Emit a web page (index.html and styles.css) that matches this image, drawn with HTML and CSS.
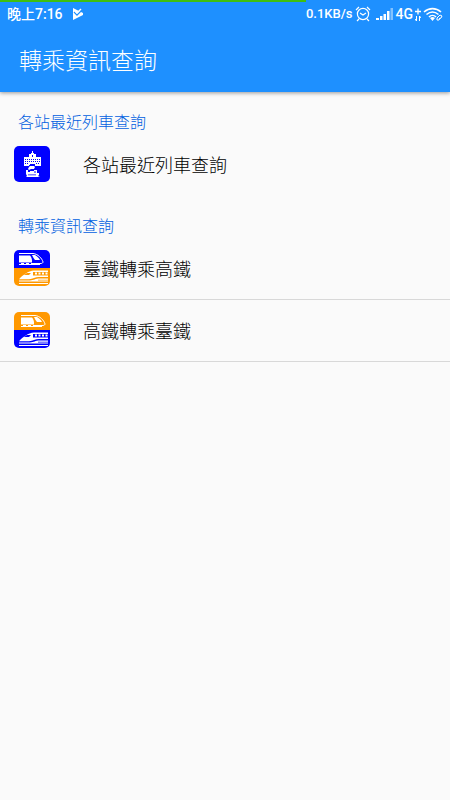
FILE: index.html
```html
<!DOCTYPE html>
<html lang="zh-Hant">
<head>
    <meta charset="UTF-8">
    <meta name="viewport" content="width=device-width, initial-scale=1.0">
    <title>轉乘資訊查詢</title>
    <link rel="stylesheet" href="styles.css">
</head>
<body>
    <svg class="defs" aria-hidden="true">
        <!-- train with a sloped nose, 36x18 -->
        <symbol id="train-slope" viewBox="0 0 36 18">
            <path fill="none" stroke="#fff" stroke-width="1" d="M5 3.500h14c5 .4 9 5 10 8.400 0 1-1 1.600-2 1.600h-7"/>
            <path d="M5 5.500h11c1 1 2 3 2 5v2H5z"/>
            <path d="M18 5h3c2 1 4 3 5 5h-5c-1-1-2-3-3-5z"/>
            <path d="M5 14h2v-1h3v1h2v-1h3v1h2v-1h3v1h6v1H5z"/>
        </symbol>
        <!-- high speed train, 36x18 -->
        <symbol id="train-fast" viewBox="0 0 36 18">
            <path fill-rule="evenodd" d="M34 2.600H20C14 3 9 7 5 11.200h10c4 0 6-2.200 10-2.200h9V7.500H19V4h15zM13 5h4l-2 2h-5z"/>
            <path d="M21 4.600h2v2h-2zM24.500 4.600h2v2h-2zM28 4.600h2v2h-2zM31.500 4.600h2v2h-2z"/>
            <path d="M34 10.500h-8c-5 0-6 1.900-10 1.900H5v1.100h29v-1.100H24v-.6h10zM5 15h29v1H5z"/>
        </symbol>
    </svg>

    <header class="top">
        <div class="status-bar">
            <div class="network-progress"></div>
            <div class="status-group">
                <span>晚上7:16</span>
                <svg width="12" height="12" viewBox="0 0 12 12">
                    <path fill="#fff" d="M1 0l10 5v2L1 12z"/>
                    <path fill="none" stroke="#1e90ff" stroke-width="1.300" d="M2 4l3 3 6-6"/>
                    <path fill="none" stroke="#fff" stroke-width="1.400" d="M3 3l2 2 4-4"/>
                </svg>
            </div>
            <div class="status-group status-right">
                <span class="speed">0.1KB/s</span>
                <svg width="16" height="16" viewBox="0 0 16 16" fill="none" stroke="#fff" stroke-width="1.200">
                    <circle cx="8" cy="8" r="5.600"/>
                    <path d="M5 7l3 2 3-2M1 4l3-3M15 4l-3-3M4 13l-2 2M12 13l2 2"/>
                </svg>
                <svg class="signal-icon" width="17" height="12" viewBox="0 0 17 12" fill="#fff">
                    <path d="M0 10h3v2H0zM4 8h2.500v4H4zM7.500 6H10v6H7.500zM11 3h2.500v9H11z"/>
                    <path opacity=".45" d="M14.500 0H17v12h-2.500z"/>
                </svg>
                <span class="mobile">4G</span>
                <svg width="6" height="13" viewBox="0 0 6 13" fill="none" stroke="#fff">
                    <path stroke-width="1.300" d="M0 3.500h6M3 .5v6"/>
                    <path d="M1.500 8v5M0 11l1.500 2M4.500 13V8M6 10L4.500 8"/>
                </svg>
                <svg width="20" height="14" viewBox="0 0 20 14" fill="none" stroke="#fff" stroke-width="1.600">
                    <path d="M1 5c5-4.500 12-4.500 17 0M3.500 7.500c4-3.300 8-3.300 12 0M6 10c2-2 5-2 7 0"/>
                    <path fill="#fff" stroke="none" d="M7 11q2.500-2 5 0l-2.500 3z"/>
                    <path stroke-width="1" d="M15 10l2-2 2 1-1 2-2 1M16 9l-2 2 0 2 2 0 1-2"/>
                </svg>
            </div>
        </div>
        <h1 class="title">轉乘資訊查詢</h1>
    </header>

    <main>
        <section>
            <h2 class="section-title">各站最近列車查詢</h2>
            <ul class="list">
                <li>
                    <a class="item" href="#station">
                        <svg class="item-icon" viewBox="0 0 36 36">
                            <path fill="#00f" d="M0 0h36v36H0z"/>
                            <!-- station building -->
                            <path fill="#fff" d="M18 5h1v2h1v1h2v3h5v9h-6v-1h-6v1h-5v-9h5V8h2V7h1z"/>
                            <path stroke="#00f" stroke-width="1" stroke-dasharray="1 1" d="M11 13.500h15M11 15.500h15M11 17.500h4M22 17.500h4"/>
                            <path fill="#00f" d="M18 9h1v2h-1zM16 18h5v1h-5z"/>
                            <!-- smoke and engine -->
                            <path fill="#fff" d="M16 20h4l1 1-1 2h-3l-2 1-1-1 1-2zM12 24h2v2h2v-1h4v-1h3v3h2v2l-1 1 2 1H12l1-1-1-2z"/>
                            <path fill="#00f" d="M14 28.500h8v.8h-8zM20 25.500h2v1h-2z"/>
                        </svg>
                        <span>各站最近列車查詢</span>
                    </a>
                </li>
            </ul>
        </section>

        <section>
            <h2 class="section-title">轉乘資訊查詢</h2>
            <ul class="list divided">
                <li>
                    <a class="item" href="#tra-thsr">
                        <svg class="item-icon" viewBox="0 0 36 36" fill="#fff">
                            <path fill="#00f" d="M0 0h36v18H0z"/>
                            <path fill="#ff9800" d="M0 18h36v18H0z"/>
                            <use href="#train-slope" width="36" height="18"/>
                            <use href="#train-fast" y="18" width="36" height="18"/>
                        </svg>
                        <span>臺鐵轉乘高鐵</span>
                    </a>
                </li>
                <li>
                    <a class="item" href="#thsr-tra">
                        <svg class="item-icon" viewBox="0 0 36 36" fill="#fff">
                            <path fill="#ff9800" d="M0 0h36v18H0z"/>
                            <path fill="#00f" d="M0 18h36v18H0z"/>
                            <use href="#train-slope" x="2" width="36" height="18"/>
                            <use href="#train-fast" y="18" width="36" height="18"/>
                        </svg>
                        <span>高鐵轉乘臺鐵</span>
                    </a>
                </li>
            </ul>
        </section>
    </main>
</body>
</html>
```

FILE: styles.css
```css
body {
    margin: 0;
    min-height: 100vh;
    background: #fafafa;
    color: #000;
    font-family: Roboto, "Noto Sans CJK TC", sans-serif;
}
.defs {
    display: none;
}
.top {
    background: #1e90ff;
    color: white;
    box-shadow: 0 1px 4px rgba(0, 0, 0, 0.4);
}
.status-bar {
    position: relative;
    display: flex;
    justify-content: space-between;
    align-items: center;
    height: 28px;
    padding: 0 7px;
    font-size: 14px;
    font-weight: 500;
    line-height: 20px;
}
.network-progress {
    position: absolute;
    top: 0;
    left: 0;
    width: 68%;
    height: 2px;
    background: #3fbf0f;
}
.status-group {
    display: flex;
    align-items: center;
    gap: 9px;
}
.status-right {
    gap: 2px;
}
.speed {
    font-size: 13px;
}
.signal-icon {
    margin-left: 3px;
}
.mobile {
    margin-left: 1px;
}
.title {
    margin: 0;
    padding: 4px 19px 0;
    font-size: 23px;
    font-weight: 300;
    line-height: 60px;
}
.section-title {
    margin: 0;
    padding: 20px 18px 0;
    color: #0060e0;
    font-size: 16px;
    font-weight: 300;
    line-height: 22px;
}
.list {
    list-style: none;
    margin: 0;
    padding: 0;
}
.item {
    display: flex;
    align-items: center;
    gap: 33px;
    padding: 12px 14px 14px;
    font-size: 18px;
    font-weight: 300;
    color: inherit;
    text-decoration: none;
}
.divided .item {
    padding-bottom: 13px;
    border-bottom: 1px solid #d8d8d8;
}
.item-icon {
    width: 36px;
    height: 36px;
    border-radius: 5px;
}
```
